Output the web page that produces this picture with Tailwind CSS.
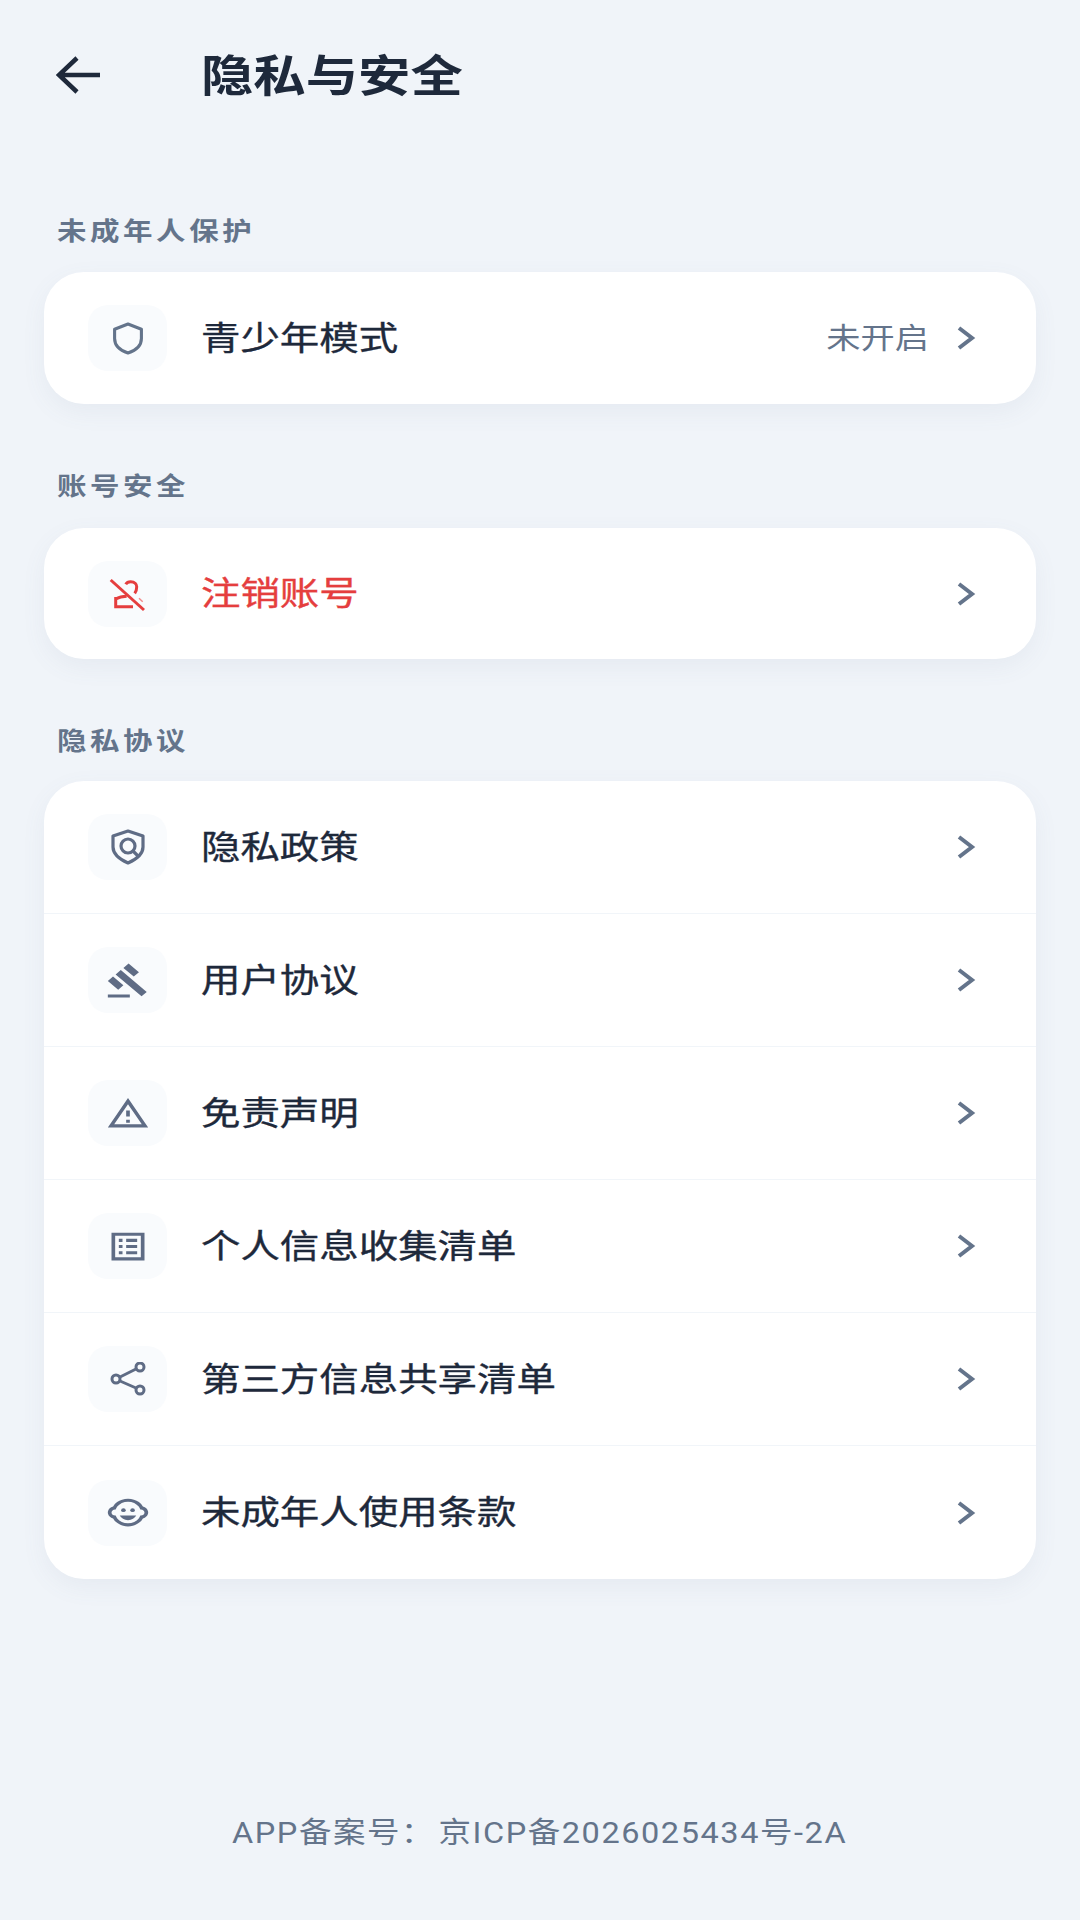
<!DOCTYPE html>
<html lang="zh-CN">
<head>
<meta charset="utf-8">
<script src="https://cdn.jsdelivr.net/npm/@tailwindcss/browser@4"></script>
</head>
<body class="m-0">
<div class="w-[1080px] h-[1920px] bg-[#f0f4f9] flex flex-col font-['Noto_Sans_CJK_SC','Noto_Sans',sans-serif] text-[#1e293b] overflow-hidden">

  <header class="h-[150px] shrink-0 flex items-center pl-[56px]">
    <svg class="w-[44px] h-[38px] shrink-0" viewBox="0 0 44 38" fill="none" stroke="#1e293b" stroke-width="4.5"><path d="M44 19H4M21 2 3 19l18 17"/></svg>
    <h1 class="ml-[101px] pb-[5px] text-[44px] leading-none font-bold origin-left scale-x-[1.19]">隐私与安全</h1>
  </header>

  <main class="px-[44px] flex flex-col">
    <section class="mt-[61px]">
      <h2 class="h-[40px] ml-[13px] pb-[2px] flex items-center text-[25px] font-bold text-[#64748b] tracking-[3px] origin-left scale-x-[1.18]">未成年人保护</h2>
      <div class="mt-[21px] bg-white rounded-[40px] shadow-[0_8px_24px_rgba(100,116,139,0.07)]">
        <div class="h-[132px] flex items-center pl-[44px] pr-[55px]">
          <div class="w-[79px] h-[66px] shrink-0 rounded-[20px] bg-[#f9fbfd] flex items-center justify-center">
            <svg class="w-[34px] h-[33px]" viewBox="0 0 32 32" fill="none" stroke="#64748b" stroke-width="3" stroke-linejoin="round"><path d="M16 2 29 7v9c0 7-5 11.500-13 14C8 27.500 3 23 3 16V7z"/></svg>
          </div>
          <span class="ml-[34px] pb-[4px] text-[33px] leading-none [-webkit-text-stroke:0.35px] origin-left scale-x-[1.195]">青少年模式</span>
          <span class="ml-auto mr-[20px] pb-[3px] text-[29px] leading-none text-[#64748b] origin-right scale-x-[1.18]">未开启</span>
          <svg class="w-[32px] h-[32px] shrink-0" viewBox="0 0 32 32" fill="none" stroke="#64748b" stroke-width="4"><path d="M10 6l13 10-13 10"/></svg>
        </div>
      </div>
    </section>

    <section class="mt-[62px]">
      <h2 class="h-[40px] ml-[13px] pb-[2px] flex items-center text-[25px] font-bold text-[#64748b] tracking-[3px] origin-left scale-x-[1.18]">账号安全</h2>
      <div class="mt-[22px] bg-white rounded-[40px] shadow-[0_8px_24px_rgba(100,116,139,0.07)]">
        <div class="h-[131px] flex items-center pl-[44px] pr-[55px]">
          <div class="w-[79px] h-[66px] shrink-0 rounded-[20px] bg-[#f9fbfd] flex items-center justify-center">
            <svg class="w-[40px] h-[36px]" viewBox="0 0 40 36" fill="none" stroke="#e53e3e" stroke-width="3"><path d="M2.700 4 36 34"/><path d="M17.700 8.300C19 6 21 5.700 22.700 5.700c4 0 6 2.500 6 5 0 3-1 5.300-2 6.600"/><path d="M7.700 21v9.700H25"/><path d="M7.700 23c3-1.800 7-2.800 11-2.800"/><path d="m31 22.300 3.700 3.400" stroke-width="1.500" stroke="#f28b8b"/></svg>
          </div>
          <span class="ml-[34px] pb-[4px] text-[33px] leading-none [-webkit-text-stroke:0.35px] text-[#e53e3e] origin-left scale-x-[1.195]">注销账号</span>
          <svg class="ml-auto w-[32px] h-[32px] shrink-0" viewBox="0 0 32 32" fill="none" stroke="#64748b" stroke-width="4"><path d="M10 6l13 10-13 10"/></svg>
        </div>
      </div>
    </section>

    <section class="mt-[62px]">
      <h2 class="h-[40px] ml-[13px] pb-[2px] flex items-center text-[25px] font-bold text-[#64748b] tracking-[3px] origin-left scale-x-[1.18]">隐私协议</h2>
      <div class="mt-[20px] bg-white rounded-[40px] shadow-[0_8px_24px_rgba(100,116,139,0.07)] divide-y divide-[#f1f5f9]">
        <div class="h-[133px] flex items-center pl-[44px] pr-[55px]">
          <div class="w-[79px] h-[66px] shrink-0 rounded-[20px] bg-[#f9fbfd] flex items-center justify-center">
            <svg class="w-[36px] h-[36px]" viewBox="0 0 36 36" fill="none" stroke="#5f6c85" stroke-width="3.200" stroke-linejoin="round"><path d="M18 2 33 7v11c0 7-6 12-15 16C9 30 3 25 3 18V7z"/><circle cx="18" cy="17" r="7"/><path d="m23 22 6 6"/></svg>
          </div>
          <span class="ml-[34px] pb-[4px] text-[33px] leading-none [-webkit-text-stroke:0.35px] origin-left scale-x-[1.195]">隐私政策</span>
          <svg class="ml-auto w-[32px] h-[32px] shrink-0" viewBox="0 0 32 32" fill="none" stroke="#64748b" stroke-width="4"><path d="M10 6l13 10-13 10"/></svg>
        </div>
        <div class="h-[133px] flex items-center pl-[44px] pr-[55px]">
          <div class="w-[79px] h-[66px] shrink-0 rounded-[20px] bg-[#f9fbfd] flex items-center justify-center">
            <svg class="w-[44px] h-[37px]" viewBox="0 0 24 24" preserveAspectRatio="none" fill="#5f6c85"><path d="M1 21h12v2H1zM5.245 8.070l2.830-2.827 14.140 14.142-2.828 2.828zM12.317 1l5.657 5.656-2.830 2.830-5.654-5.660zM3.825 9.485l5.657 5.657-2.828 2.828-5.657-5.657z"/></svg>
          </div>
          <span class="ml-[34px] pb-[4px] text-[33px] leading-none [-webkit-text-stroke:0.35px] origin-left scale-x-[1.195]">用户协议</span>
          <svg class="ml-auto w-[32px] h-[32px] shrink-0" viewBox="0 0 32 32" fill="none" stroke="#64748b" stroke-width="4"><path d="M10 6l13 10-13 10"/></svg>
        </div>
        <div class="h-[133px] flex items-center pl-[44px] pr-[55px]">
          <div class="w-[79px] h-[66px] shrink-0 rounded-[20px] bg-[#f9fbfd] flex items-center justify-center">
            <svg class="w-[44px] h-[37px]" viewBox="0 0 24 24" preserveAspectRatio="none" fill="#5f6c85"><path d="M12 5.990 19.530 19H4.470L12 5.990M12 2 1 21h22L12 2zm1 14h-2v2h2v-2zm0-6h-2v4h2v-4z"/></svg>
          </div>
          <span class="ml-[34px] pb-[4px] text-[33px] leading-none [-webkit-text-stroke:0.35px] origin-left scale-x-[1.195]">免责声明</span>
          <svg class="ml-auto w-[32px] h-[32px] shrink-0" viewBox="0 0 32 32" fill="none" stroke="#64748b" stroke-width="4"><path d="M10 6l13 10-13 10"/></svg>
        </div>
        <div class="h-[133px] flex items-center pl-[44px] pr-[55px]">
          <div class="w-[79px] h-[66px] shrink-0 rounded-[20px] bg-[#f9fbfd] flex items-center justify-center">
            <svg class="w-[44px] h-[37px]" viewBox="0 0 24 24" preserveAspectRatio="none" fill="#5f6c85"><path d="M11 7h6v2h-6zm0 4h6v2h-6zm0 4h6v2h-6zM7 7h2v2H7zm0 4h2v2H7zm0 4h2v2H7zM3 3v18h18V3zM19 19H5V5h14v14z"/></svg>
          </div>
          <span class="ml-[34px] pb-[4px] text-[33px] leading-none [-webkit-text-stroke:0.35px] origin-left scale-x-[1.195]">个人信息收集清单</span>
          <svg class="ml-auto w-[32px] h-[32px] shrink-0" viewBox="0 0 32 32" fill="none" stroke="#64748b" stroke-width="4"><path d="M10 6l13 10-13 10"/></svg>
        </div>
        <div class="h-[133px] flex items-center pl-[44px] pr-[55px]">
          <div class="w-[79px] h-[66px] shrink-0 rounded-[20px] bg-[#f9fbfd] flex items-center justify-center">
            <svg class="w-[36px] h-[34px]" viewBox="0 0 36 34" fill="none" stroke="#5f6c85" stroke-width="3"><circle cx="6" cy="17" r="4"/><circle cx="30" cy="5" r="4"/><circle cx="30" cy="28" r="4"/><path d="m10 15 16-8M10 19l16 7"/></svg>
          </div>
          <span class="ml-[34px] pb-[4px] text-[33px] leading-none [-webkit-text-stroke:0.35px] origin-left scale-x-[1.195]">第三方信息共享清单</span>
          <svg class="ml-auto w-[32px] h-[32px] shrink-0" viewBox="0 0 32 32" fill="none" stroke="#64748b" stroke-width="4"><path d="M10 6l13 10-13 10"/></svg>
        </div>
        <div class="h-[133px] flex items-center pl-[44px] pr-[55px]">
          <div class="w-[79px] h-[66px] shrink-0 rounded-[20px] bg-[#f9fbfd] flex items-center justify-center">
            <svg class="w-[44px] h-[37px]" viewBox="0 0 24 24" preserveAspectRatio="none" fill="#5f6c85"><circle cx="14.500" cy="10.500" r="1.250"/><circle cx="9.500" cy="10.500" r="1.250"/><path d="M16.500 14h-9c.76 1.770 2.490 3 4.500 3s3.740-1.230 4.500-3z"/><path d="M22.940 12.660c.04-.21.06-.43.06-.66s-.02-.45-.06-.66c-.25-1.510-1.360-2.740-2.810-3.170-.53-1.120-1.280-2.100-2.190-2.910C16.360 3.850 14.280 3 12 3s-4.360.85-5.940 2.260c-.92.81-1.670 1.800-2.190 2.910-1.450.43-2.560 1.650-2.810 3.170-.04.21-.06.43-.06.66s.02.45.06.66c.25 1.510 1.360 2.740 2.810 3.170.52 1.110 1.270 2.090 2.170 2.890C7.620 20.140 9.710 21 12 21s4.380-.86 5.970-2.280c.9-.8 1.650-1.790 2.170-2.890 1.440-.43 2.550-1.650 2.800-3.170zM19 14c-.1 0-.19-.02-.29-.03-.2.670-.49 1.290-.86 1.860C16.600 17.740 14.450 19 12 19s-4.600-1.260-5.850-3.170c-.37-.57-.66-1.190-.86-1.860-.1.010-.19.030-.29.030-1.100 0-2-.9-2-2s.9-2 2-2c.1 0 .19.020.29.030.2-.67.49-1.290.86-1.860C7.400 6.260 9.550 5 12 5s4.600 1.260 5.850 3.170c.37.570.66 1.190.86 1.860.1-.01.19-.03.29-.03 1.100 0 2 .9 2 2s-.9 2-2 2z"/></svg>
          </div>
          <span class="ml-[34px] pb-[4px] text-[33px] leading-none [-webkit-text-stroke:0.35px] origin-left scale-x-[1.195]">未成年人使用条款</span>
          <svg class="ml-auto w-[32px] h-[32px] shrink-0" viewBox="0 0 32 32" fill="none" stroke="#64748b" stroke-width="4"><path d="M10 6l13 10-13 10"/></svg>
        </div>
      </div>
    </section>
  </main>

  <footer class="mt-auto pb-[66px] flex justify-center">
    <p class="h-[40px] flex items-center gap-[3px] font-['Roboto','Noto_Sans_CJK_SC',sans-serif] text-[29px] tracking-[1.4px] text-[#64748b] scale-x-[1.12] whitespace-pre"><span>APP备案号：</span><span>京ICP备2026025434号-2A</span></p>
  </footer>
</div>
</body>
</html>
